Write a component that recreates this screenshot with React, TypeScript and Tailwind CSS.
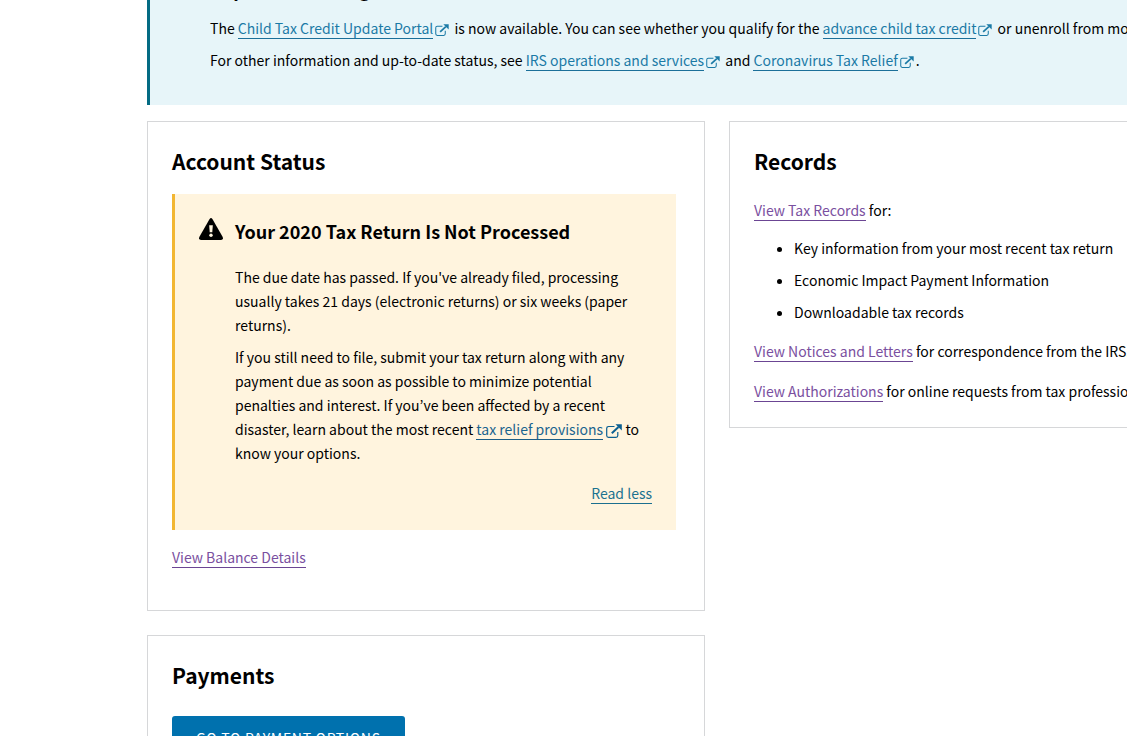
import React from 'react';
import { Info } from 'lucide-react';

interface LinkProps {
  children: React.ReactNode;
  tone?: string;
}

const TextLink: React.FC<LinkProps> = ({ children, tone = 'text-[#1b7aa6] border-[#1b6f99]' }) => (
  <a href="#" className={`border-b ${tone}`}>{children}</a>
);

const visited = 'text-[#7a50a0] border-[#6b4593]';

const ExternalIcon: React.FC<{ className: string }> = ({ className }) => (
  <svg viewBox="0 0 16 14" fill="none" className={`inline-block ${className}`} aria-hidden="true">
    <path d="M8.5 2.5H2.5A1.8 1.8 0 0 0 .7 4.3V11.5A1.8 1.8 0 0 0 2.5 13.3H10A1.8 1.8 0 0 0 11.8 11.5V8" stroke="currentColor" strokeWidth="1.2" />
    <path d="M5.8 9.2L12.5 3" stroke="currentColor" strokeWidth="2" />
    <path d="M9.5 .2H15.8V6.5Z" fill="currentColor" />
  </svg>
);

const WarningIcon = () => (
  <svg viewBox="0 0 24 22" className="w-6 h-[22px] mt-px shrink-0" aria-hidden="true">
    <path d="M10.6 1Q12-.8 13.4 1L23.7 19Q24.6 21.6 22 22H2Q-.6 21.6 .3 19Z" fill="#000" />
    <path d="M10.2 7.2H13.8L13.3 14.2H10.7Z" fill="#fff4de" />
    <circle cx="12" cy="17.2" r="1.7" fill="#fff4de" />
  </svg>
);

const Card: React.FC<{ title: string; children: React.ReactNode }> = ({ title, children }) => (
  <section className="border border-[#d6d7d9] bg-white p-6">
    <h2 className="text-[21px] leading-[30px] pb-0.5 font-bold">{title}</h2>
    {children}
  </section>
);

const records = [
  'Key information from your most recent tax return',
  'Economic Impact Payment Information',
  'Downloadable tax records',
];

export default function App() {
  return (
    <div className="h-screen overflow-hidden bg-white pl-[147px] text-[14px] leading-6 text-black font-['Noto_Sans_CJK_KR',sans-serif]">
      <main className="min-w-[1140px] -mt-[49px]">
        <section className="flex gap-3 border-l-3 border-[#046b83] bg-[#e7f5f9] pt-6 pb-[33px] pl-6 pr-6 mb-4">
          <Info className="w-6 h-6 shrink-0 mt-px" />
          <div>
            <h3 className="text-[18px] leading-7 font-bold mb-[13px]">Important Message</h3>
            <p className="mb-2">
              The <TextLink>Child Tax Credit Update Portal</TextLink>
              <ExternalIcon className="w-3.5 h-3 mx-0.5 text-[#1b7aa6]" /> is now available. You can see whether you qualify for the{' '}
              <TextLink>advance child tax credit</TextLink>
              <ExternalIcon className="w-3.5 h-3 mx-0.5 text-[#1b7aa6]" /> or unenroll from monthly payments.
            </p>
            <p>
              For other information and up-to-date status, see <TextLink>IRS operations and services</TextLink>
              <ExternalIcon className="w-3.5 h-3 mx-0.5 text-[#1b7aa6]" /> and <TextLink>Coronavirus Tax Relief</TextLink>
              <ExternalIcon className="w-3.5 h-3 mx-0.5 text-[#1b7aa6]" />.
            </p>
          </div>
        </section>

        <div className="grid grid-cols-2 gap-6 items-start">
          <div className="flex flex-col gap-6">
            <Card title="Account Status">
              <div className="flex gap-3 border-l-3 border-[#f2b632] bg-[#fff4de] px-6 pt-[23px] pb-[25px] mt-4 mr-1 mb-[15px]">
                <WarningIcon />
                <div className="flex-1">
                  <h3 className="text-[18px] leading-7 font-bold mb-5">Your 2020 Tax Return Is Not Processed</h3>
                  <p className="mb-2">
                    The due date has passed. If you've already filed, processing usually takes 21 days (electronic
                    returns) or six weeks (paper returns).
                  </p>
                  <p className="mb-4">
                    If you still need to file, submit your tax return along with any payment due as soon as possible to
                    minimize potential penalties and interest. If you’ve been affected by a recent disaster, learn about
                    the most recent <TextLink tone="text-[#1b648f] border-[#1b5f88]">tax relief provisions</TextLink>{' '}
                    <ExternalIcon className="w-4 h-3.5 text-[#0b5f91]" /> to know your options.
                  </p>
                  <div className="text-right">
                    <button type="button" className="leading-6">
                      <span className="border-b text-[#1b7290] border-[#1b6f8f]">Read less</span>
                    </button>
                  </div>
                </div>
              </div>
              <p className="mb-[17px]">
                <TextLink tone={visited}>View Balance Details</TextLink>
              </p>
            </Card>

            <Card title="Payments">
              <button type="button" className="mt-6 rounded-[3px] bg-[#0071ae] px-6 py-2.5 tracking-wider text-white">
                GO TO PAYMENT OPTIONS
              </button>
            </Card>
          </div>

          <Card title="Records">
            <p className="mt-5 mb-3.5">
              <TextLink tone={visited}>View Tax Records</TextLink> for:
            </p>
            <ul className="list-disc pl-10 space-y-2 mb-[15px]">
              {records.map(item => (
                <li key={item}>{item}</li>
              ))}
            </ul>
            <p className="mb-4">
              <TextLink tone={visited}>View Notices and Letters</TextLink> for correspondence from the IRS.
            </p>
            <p>
              <TextLink tone={visited}>View Authorizations</TextLink> for online requests from tax professionals.
            </p>
          </Card>
        </div>
      </main>
    </div>
  );
}
